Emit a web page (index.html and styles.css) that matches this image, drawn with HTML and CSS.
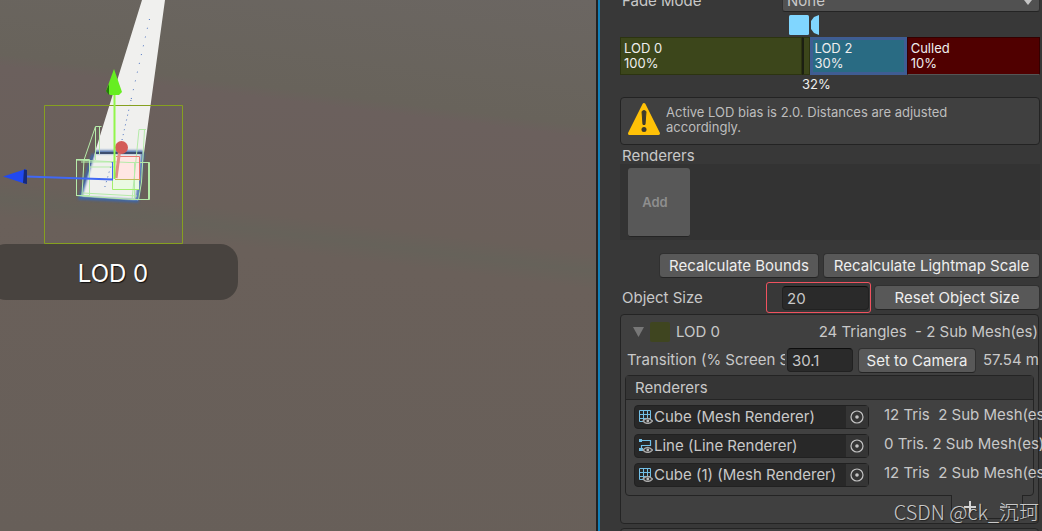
FILE: index.html
```html
<!DOCTYPE html>
<html lang="en">
  <head>
    <meta charset="UTF-8" />
    <meta name="viewport" content="width=device-width, initial-scale=1.0" />
    <title>LOD Group</title>
    <link rel="stylesheet" href="styles.css">
  </head>
  <body>
    <!-- shared icons -->
    <svg class="defs" width="0" height="0">
      <symbol id="mesh" viewBox="0 0 14 14">
        <path d="M.5 .5h11v11H.5zM4.500 .5v11M8.500 .5v11M.5 4.500h11M.5 8.500h11" fill="none" stroke="#72bfe6" />
        <path d="M4 11q4.500-5 9.500 0q-5 5-9.500 0z" fill="#282828" stroke="#aaa" stroke-width="1.300" />
        <circle cx="8.800" cy="11" r="1.400" fill="#bbb" />
      </symbol>
      <symbol id="line" viewBox="0 0 14 14">
        <path d="M1.500 1.500H11.500v5H2.500V10" fill="none" stroke="#72bfe6" stroke-width="1.200" />
        <path d="M0 0h3v3H0zM0 9h4v3H0z" fill="#72bfe6" />
        <path d="M4 11q4.500-5 9.500 0q-5 5-9.500 0z" fill="#282828" stroke="#aaa" stroke-width="1.300" />
        <circle cx="8.800" cy="11" r="1.400" fill="#bbb" />
      </symbol>
      <symbol id="target" viewBox="0 0 14 14">
        <circle cx="7" cy="7" r="6" fill="none" stroke="#c4c4c4" stroke-width="1.200" />
        <circle cx="7" cy="7" r="1.800" fill="#c4c4c4" />
      </symbol>
    </svg>

    <main class="editor">
      <section class="scene">
        <svg class="viewport" width="260" height="260" viewBox="0 0 260 260">
          <defs>
            <filter id="glow" x="-20%" y="-20%" width="140%" height="140%"><feGaussianBlur stdDeviation="1.200" /></filter>
          </defs>
          <path d="M142 0h23L144 153 138 201 80 197 95 152z" fill="#f0f0ee" />
          <path d="M95 152h48M93 154L80 198l57 3 6-48" fill="none" stroke="#3c66a8" stroke-width="3" filter="url(#glow)" />
          <path d="M96 153h46" stroke="#3d4e70" stroke-width="2" />
          <path d="M149.500 19L131 100" stroke="#4a70c0" stroke-dasharray="1 8" />
          <path d="M131 100L122 140M112 162L104 190" stroke="#4a70c0" stroke-dasharray="1 4" />
          <path d="M44.500 105.500h138v138h-138z" fill="none" stroke="#86a020" />
          <path d="M115 157h25v23h-25z" fill="#ffe6e3" />
          <path d="M113 180h26v10h-26z" fill="#eafae2" />
          <g fill="none" stroke="#b5eba9">
            <path d="M76.500 159.500h13v36h-13zM76 160l53 2.500h20.500v37H133L76 195.500M134.500 163v37M149 199.500v-37" />
            <path d="M76.500 159v37M148.500 163v36" />
            <path d="M101.500 126.500h-6L84 160l-2 35M95.500 127v33M99.500 127v27M146 129.500h-7L132 200M144.500 130l-3 52-3 18M81 162h34M90 167h25M83 193l54 3" />
          </g>
          <path d="M116 156.500h23.500v24" fill="none" stroke="#e87870" />
          <path d="M115 179.500h24.500" stroke="#c2b95c" />
          <path d="M112.500 162v27" stroke="#4068f4" />
          <path d="M112.500 180v9.500H139" stroke="#a3ef6d" fill="none" />
          <path d="M119.500 152L116 178" stroke="#df8d86" stroke-width="3" />
          <circle cx="121.500" cy="147.500" r="6.500" fill="#d45c57" />
          <path d="M26 176.500l87 3" fill="none" stroke="#4068f4" stroke-width="2" />
          <path d="M114.500 179V94" stroke="#92f64b" stroke-width="2" />
          <path d="M114 69l-8 22 4 4h9l3-3z" fill="#66ee21" />
          <path d="M109 84l-3 7 3 4z" fill="#257b0b" />
          <path d="M3 176.500l23-7.500v15z" fill="#2149f1" />
          <path d="M24 169.500l3 .5v14l-4-1z" fill="#172a78" />
        </svg>
        <div class="lod-badge">LOD 0</div>
      </section>

      <aside class="inspector">
        <div class="row fade-row">
          <label class="name" for="fade">Fade Mode</label>
          <span class="select-wrap">
            <select id="fade"><option>None</option></select>
            <svg width="8" height="5"><path d="M0 0h8L4 5z" fill="#c4c4c4" /></svg>
          </span>
        </div>

        <div class="camera-row">
          <svg width="30" height="20" fill="#80d6ff"><rect width="20" height="20" rx="1.500" /><path d="M30 0v20l-5-2-3-4V6l3-4z" /></svg>
        </div>

        <div class="lod-bar">
          <div class="lod">LOD 0<br>100%</div>
          <div class="lod lod-1"></div>
          <div class="lod lod-2">LOD 2<br>30%</div>
          <div class="lod culled">Culled<br>10%</div>
        </div>
        <div class="camera-value">32%</div>

        <div class="help-box">
          <svg width="34" height="34" viewBox="0 0 34 34">
            <path d="M17 2.500L31.500 31.500h-29z" fill="#ffc107" stroke="#ffc107" stroke-width="3" stroke-linejoin="round" />
            <path d="M15 9.500q2-2 4 0l-1 13h-2z" fill="#3e3a2d" stroke="#3e3a2d" stroke-linejoin="round" />
            <circle cx="17" cy="27.500" r="2.500" fill="#3e3a2d" />
          </svg>
          <p>Active LOD bias is 2.0. Distances are adjusted accordingly.</p>
        </div>

        <h2 class="heading">Renderers</h2>
        <div class="drop-area"><button class="add">Add</button></div>

        <div class="row actions">
          <button class="btn bounds">Recalculate Bounds</button>
          <button class="btn lightmap">Recalculate Lightmap Scale</button>
        </div>

        <div class="row size-row">
          <label class="name" for="size">Object Size</label>
          <span class="highlight"><input class="field" id="size" value="20"></span>
          <button class="btn reset">Reset Object Size</button>
        </div>

        <section class="panel">
          <div class="row panel-head">
            <svg width="12" height="10"><path d="M0 0h11L5.500 10z" fill="#777" /></svg>
            <span class="swatch"></span>
            <span class="title">LOD 0</span>
            <span class="stats">24 Triangles&nbsp; - 2 Sub Mesh(es)</span>
          </div>
          <div class="row transition">
            <label for="transition">Transition (% Screen Size)</label>
            <input class="field" id="transition" value="30.1">
            <button class="btn to-camera">Set to Camera</button>
            <span class="distance">57.54 m</span>
          </div>
          <div class="list">
            <h3 class="list-head">Renderers</h3>
            <div class="item">
              <div class="object">
                <svg width="14" height="14"><use href="#mesh" /></svg>
                <span>Cube (Mesh Renderer)</span>
                <button aria-label="Select"><svg width="14" height="14"><use href="#target" /></svg></button>
              </div>
              <span class="info">12 Tris&nbsp; 2 Sub Mesh(es)</span>
            </div>
            <div class="item">
              <div class="object">
                <svg width="14" height="14"><use href="#line" /></svg>
                <span>Line (Line Renderer)</span>
                <button aria-label="Select"><svg width="14" height="14"><use href="#target" /></svg></button>
              </div>
              <span class="info">0 Tris. 2 Sub Mesh(es)</span>
            </div>
            <div class="item">
              <div class="object">
                <svg width="14" height="14"><use href="#mesh" /></svg>
                <span>Cube (1) (Mesh Renderer)</span>
                <button aria-label="Select"><svg width="14" height="14"><use href="#target" /></svg></button>
              </div>
              <span class="info">12 Tris&nbsp; 2 Sub Mesh(es)</span>
            </div>
          </div>
          <div class="list-foot">
            <button aria-label="Add renderer"><svg width="12" height="12"><path d="M6 0v12M0 6h12" stroke="#d4d4d4" stroke-width="2" /></svg></button>
            <button aria-label="Remove renderer"><svg width="12" height="12"><path d="M1 6h10" stroke="#aaa" stroke-width="2" /></svg></button>
          </div>
        </section>
        <section class="panel next"></section>
      </aside>
    </main>
    <div class="watermark">CSDN @ck_沉珂</div>
  </body>
</html>
```

FILE: styles.css
```css
* {
  box-sizing: border-box;
}

body {
  margin: 0;
  overflow: hidden;
  font-family: Inter, "Noto Sans CJK SC", sans-serif;
  font-size: 15px;
  line-height: 20px;
  color: #c8c8c8;
  background: #383838;
}

button, input, select {
  font: inherit;
  color: inherit;
}

h2, h3, p {
  margin: 0;
  font-size: inherit;
  font-weight: 400;
}

.defs {
  position: absolute;
}

.editor {
  display: flex;
  height: 100vh;
}

.scene {
  flex: 1;
  position: relative;
  overflow: hidden;
  background: linear-gradient(187deg, #6b6662, #68635b 21%, #6b605d 23%, #6a605a 42%, #66625a 45%, #6a605a 48%, #675f59);
  border-right: 2px solid #222;
}

.viewport {
  display: block;
}

/* label under the selected object, runs off the left edge */
.lod-badge {
  position: absolute;
  top: 244px;
  left: -12px;
  width: 250px;
  padding: 16px 0 12px;
  border-radius: 18px;
  background: #48433f;
  color: #fff;
  font-size: 24px;
  line-height: 28px;
  text-align: center;
  text-shadow: 1px 1px 1px #111;
}

.inspector {
  flex: 0 0 444px;
  overflow: hidden;
  padding: 0 2px 0 20px;
  border-left: 2px solid #1180ba;
}

.row {
  display: flex;
  align-items: center;
}

.name {
  padding-left: 2px;
}

/* scrolled half out of view */
.fade-row {
  height: 22px;
  margin-top: -10px;
  justify-content: space-between;
}

.select-wrap {
  position: relative;
  width: 258px;
}

.select-wrap svg {
  position: absolute;
  right: 8px;
  top: 10px;
}

select {
  display: block;
  appearance: none;
  width: 100%;
  height: 22px;
  padding: 0 4px;
  border: 1px solid #303030;
  border-bottom-color: #242424;
  border-radius: 3px;
  background: #515151;
}

.camera-row {
  display: flex;
  height: 25px;
  padding: 3px 0 0 169px;
}

.lod-bar {
  display: grid;
  grid-template-columns: 182fr 8px 96fr 133fr;
  height: 38px;
  color: #eee;
  font-size: 13px;
  line-height: 15px;
}

.lod {
  padding: 3px;
  border: 1px solid #2c3410;
  background: #3c461b;
}

.lod-1 {
  padding: 0;
  border-left: 2px solid #1c1f12;
}

.lod-2 {
  padding: 1px;
  border: 3px solid #3f5d93;
  background: #296b83;
}

.culled {
  background: #500000;
  border: 1px solid #300;
  border-bottom-color: #555;
}

.camera-value {
  margin: 2px 0 0 182px;
  color: #eee;
  font-size: 13px;
  line-height: 15px;
}

.help-box {
  display: flex;
  gap: 5px;
  min-height: 48px;
  margin-top: 5px;
  padding: 4px 6px;
  border: 1px solid #232323;
  border-radius: 4px;
  background: #404040;
  color: #bdbdbd;
  font-size: 13px;
  line-height: 15px;
}

.help-box svg {
  flex: none;
}

.help-box p {
  max-width: 310px;
  padding-top: 3px;
}

.heading {
  margin-top: 2px;
  padding: 1px 2px 0;
  line-height: 16px;
}

.drop-area {
  padding: 4px 8px 3px;
  background: #333;
}

.add {
  display: block;
  width: 62px;
  height: 69px;
  padding: 0 8px 0 0;
  border: 0;
  border-bottom: 1px solid #242424;
  border-radius: 3px;
  background: #585858;
  color: #8e8e8e;
  font-size: 13px;
  font-weight: 600;
}

.btn {
  height: 25px;
  padding: 1px 6px 0;
  border: 1px solid #303030;
  border-bottom-color: #242424;
  border-radius: 4px;
  background: #585858;
  color: #eee;
  line-height: 20px;
  white-space: nowrap;
}

.actions {
  justify-content: flex-end;
  gap: 4px;
  margin-top: 13px;
}

.bounds {
  width: 160px;
}

.lightmap {
  width: 217px;
}

.size-row {
  margin-top: 4px;
}

.highlight {
  display: flex;
  width: 105px;
  height: 31px;
  margin-left: auto;
  padding: 3px 1px 3px 15px;
  border: 1px solid #f0525f;
  border-radius: 3px;
}

.field {
  width: 100%;
  height: 24px;
  padding: 0 4px;
  border: 1px solid #212121;
  border-top-color: #0d0d0d;
  border-radius: 4px;
  background: #2a2a2a;
}

.reset {
  width: 166px;
  margin-left: 3px;
}

.panel {
  margin-right: 1px;
  padding: 7px 4px 4px;
  border: 1px solid #242424;
  border-radius: 4px;
  background: #404040;
}

.size-row + .panel {
  margin-top: 1px;
}

.panel-head {
  height: 20px;
  padding-left: 8px;
}

.swatch {
  width: 20px;
  height: 20px;
  margin: 0 6px 0 5px;
  border-radius: 2px;
  background: #3f4520;
}

.stats {
  margin-left: auto;
  margin-right: -4px;
}

.transition {
  height: 24px;
  margin: 6px 0 3px 2px;
  white-space: nowrap;
}

.transition label {
  flex: 0 0 158px;
  overflow: hidden;
}

.transition .field {
  flex: 0 0 66px;
  margin: 0 5px 0 2px;
}

.to-camera {
  flex: 0 0 118px;
}

.distance {
  width: 50px;
  margin-left: 7px;
}

.list {
  padding-bottom: 8px;
  border: 1px solid #242424;
  border-radius: 4px;
  background: #414141;
}

.list-head {
  height: 24px;
  margin-bottom: 5px;
  padding: 2px 9px 0;
  border-bottom: 1px solid #242424;
  background: #353535;
}

.item {
  display: flex;
  gap: 15px;
  height: 24px;
  margin-bottom: 5px;
  padding-left: 8px;
  white-space: nowrap;
}

.item:last-child {
  margin-bottom: 0;
}

.object {
  display: flex;
  align-items: center;
  flex: 0 0 235px;
  padding-left: 4px;
  border: 1px solid #212121;
  border-radius: 4px;
  background: #282828;
}

.object span {
  margin-left: 1px;
}

.object button {
  display: flex;
  align-items: center;
  justify-content: center;
  width: 22px;
  height: 22px;
  margin-left: auto;
  padding: 0;
  border: 0;
  background: #353535;
}

.list-foot {
  display: flex;
  justify-content: space-around;
  width: 72px;
  height: 24px;
  margin: -1px 11px 0 auto;
  border: 1px solid #242424;
  border-top: 0;
  border-radius: 0 0 4px 4px;
  background: #414141;
}

.list-foot button {
  display: flex;
  align-items: center;
  padding: 0;
  border: 0;
  background: none;
}

.next {
  height: 40px;
  margin-top: 4px;
}

.watermark {
  position: absolute;
  right: 3px;
  bottom: 5px;
  color: #c9c9c9;
  font-family: "Noto Sans CJK SC", sans-serif;
  font-size: 20px;
  font-weight: 300;
  line-height: 28px;
  text-shadow: 1px 1px 1px #222;
}
```
